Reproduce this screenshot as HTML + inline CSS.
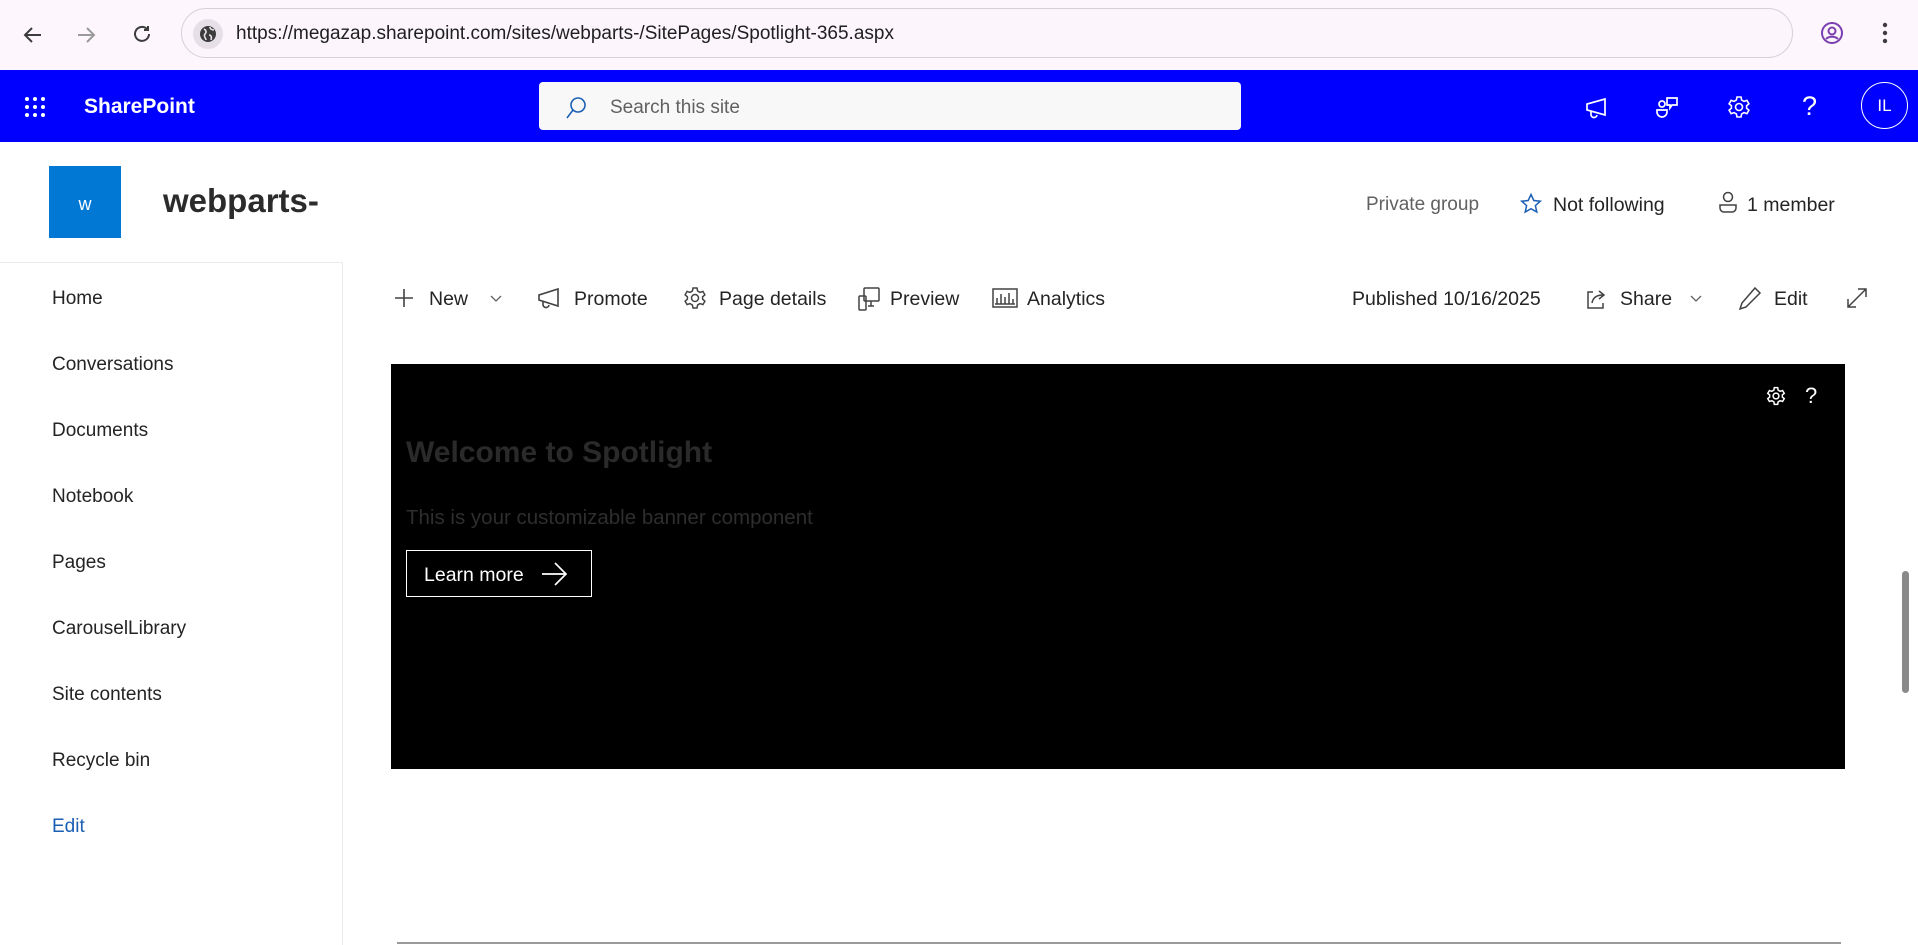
<!DOCTYPE html>
<html><head><meta charset="utf-8"><style>
*{margin:0;padding:0;box-sizing:border-box}
body{width:1918px;height:945px;overflow:hidden;background:#fff;font-family:"Liberation Sans",sans-serif;position:relative;color:#242424}
.a{position:absolute}
.t{position:absolute;white-space:nowrap}
svg{position:absolute;overflow:visible}
</style></head><body>
<div class="a" style="left:0;top:0;width:1918px;height:70px;background:#fdf7fd"></div>
<svg style="left:22px;top:24px" width="22" height="22" viewBox="0 0 22 22" fill="none" stroke="#3c3c3c" stroke-width="2"><path d="M19 11H4M10 4L3 11l7 7"/></svg>
<svg style="left:75px;top:24px" width="22" height="22" viewBox="0 0 22 22" fill="none" stroke="#9a9a9a" stroke-width="2"><path d="M3 11h15M12 4l7 7-7 7"/></svg>
<svg style="left:131px;top:23px" width="22" height="22" viewBox="0 0 22 22" fill="none" stroke="#3c3c3c" stroke-width="2"><path d="M18 11a7 7 0 1 1-2-5"/><path d="M17 3v4h-4"/></svg>
<div class="a" style="left:181px;top:8px;width:1612px;height:50px;border:1px solid #d6cfd8;border-radius:25px;background:#fcf5fc"></div>
<div class="a" style="left:193px;top:19px;width:30px;height:30px;border-radius:50%;background:#e6dfe8"></div>
<svg style="left:199px;top:25px" width="18" height="18" viewBox="0 0 18 18"><circle cx="9" cy="9" r="8" fill="#3c3c3c"/><path d="M5 4c2 1 3 3 1 5s1 4 1 6M11 2c0 2 2 3 4 3M10 10c2 0 3 2 2 5" stroke="#e6dfe8" stroke-width="1.6" fill="none"/></svg>
<div class="t" style="left:236px;top:23px;font-size:19px;color:#1f1f1f">https://megazap.sharepoint.com/sites/webparts-/SitePages/Spotlight-365.aspx</div>
<svg style="left:1820px;top:21px" width="24" height="24" viewBox="0 0 24 24" fill="none" stroke="#7b3fb0" stroke-width="2"><circle cx="12" cy="12" r="10"/><circle cx="12" cy="10" r="3.5"/><path d="M6 18c3-3 9-3 12 0"/></svg>
<svg style="left:1882px;top:22px" width="6" height="22" viewBox="0 0 6 22" fill="#3c3c3c"><circle cx="3" cy="3" r="2.2"/><circle cx="3" cy="11" r="2.2"/><circle cx="3" cy="19" r="2.2"/></svg>

<div class="a" style="left:0;top:70px;width:1918px;height:72px;background:#0000ff"></div>
<svg style="left:24px;top:96px" width="22" height="22" viewBox="0 0 22 22" fill="#fff"><circle cx="3" cy="3" r="2"/><circle cx="11" cy="3" r="2"/><circle cx="19" cy="3" r="2"/><circle cx="3" cy="11" r="2"/><circle cx="11" cy="11" r="2"/><circle cx="19" cy="11" r="2"/><circle cx="3" cy="19" r="2"/><circle cx="11" cy="19" r="2"/><circle cx="19" cy="19" r="2"/></svg>
<div class="t" style="left:84px;top:95px;font-size:21px;font-weight:bold;color:#fff">SharePoint</div>
<div class="a" style="left:539px;top:82px;width:702px;height:48px;background:#f8f8f8;border-radius:4px"></div>
<svg style="left:565px;top:96px" width="22" height="24" viewBox="0 0 22 24" fill="none" stroke="#1a5fb4" stroke-width="1.6"><circle cx="13" cy="9" r="7"/><path d="M8 14l-6 8"/></svg>
<div class="t" style="left:610px;top:97px;font-size:19px;color:#616161">Search this site</div>
<svg style="left:1584px;top:95px" width="24" height="24" viewBox="0 0 24 24" fill="none" stroke="#fff" stroke-width="1.7"><path d="M3 9v6l18 5V4z"/><path d="M7 16v3a3 3 0 0 0 6 1"/></svg>
<svg style="left:1655px;top:95px" width="24" height="24" viewBox="0 0 24 24" fill="none" stroke="#fff" stroke-width="1.7"><circle cx="7" cy="9" r="3"/><path d="M2 15h10v2a5 5 0 0 1-10 0z"/><path d="M12 3h10v7h-5l-2 3v-3h-3z"/></svg>
<svg style="left:1727px;top:95px" width="24" height="24" viewBox="0 0 24 24" fill="none" stroke="#fff" stroke-width="1.6"><circle cx="12" cy="12" r="3.5"/><path d="M10 2h4l.6 3 2.4 1.4 2.9-1 2 3.4-2.3 2v2.4l2.3 2-2 3.4-2.9-1L14.6 19 14 22h-4l-.6-3-2.4-1.4-2.9 1-2-3.4 2.3-2v-2.4l-2.3-2 2-3.4 2.9 1L9.4 5z"/></svg>
<div class="t" style="left:1802px;top:91px;font-size:27px;color:#fff">?</div>
<div class="a" style="left:1861px;top:82px;width:47px;height:47px;border:1.5px solid #fff;border-radius:50%;color:#fff;font-size:17px;text-align:center;line-height:46px">IL</div>

<div class="a" style="left:49px;top:166px;width:72px;height:72px;background:#0078d4;color:#fff;font-size:18px;text-align:center;line-height:76px">w</div>
<div class="t" style="left:163px;top:182px;font-size:33px;font-weight:bold;color:#2b2b2b">webparts-</div>
<div class="t" style="left:1366px;top:194px;font-size:19px;color:#616161">Private group</div>
<svg style="left:1520px;top:193px" width="22" height="22" viewBox="0 0 22 22" fill="none" stroke="#1a5fb4" stroke-width="1.5"><path d="M11 1.5l2.8 6 6.5.7-4.9 4.4 1.4 6.4L11 15.7l-5.8 3.3 1.4-6.4-4.9-4.4 6.5-.7z"/></svg>
<div class="t" style="left:1553px;top:194px;font-size:19.5px;color:#242424">Not following</div>
<svg style="left:1718px;top:191px" width="20" height="24" viewBox="0 0 20 24" fill="none" stroke="#424242" stroke-width="1.5"><circle cx="10" cy="6" r="4.5"/><path d="M2 14h16v3a4 4 0 0 1-4 4H6a4 4 0 0 1-4-4z"/></svg>
<div class="t" style="left:1747px;top:194px;font-size:19.5px;color:#242424">1 member</div>

<div class="a" style="left:0;top:262px;width:343px;height:683px;border-top:1px solid #eaeaea;border-right:1px solid #eaeaea"></div>
<div class="t" style="left:52px;top:288px;font-size:19px;line-height:22px">Home</div>
<div class="t" style="left:52px;top:354px;font-size:19px;line-height:22px">Conversations</div>
<div class="t" style="left:52px;top:420px;font-size:19px;line-height:22px">Documents</div>
<div class="t" style="left:52px;top:486px;font-size:19px;line-height:22px">Notebook</div>
<div class="t" style="left:52px;top:552px;font-size:19px;line-height:22px">Pages</div>
<div class="t" style="left:52px;top:618px;font-size:19px;line-height:22px">CarouselLibrary</div>
<div class="t" style="left:52px;top:684px;font-size:19px;line-height:22px">Site contents</div>
<div class="t" style="left:52px;top:750px;font-size:19px;line-height:22px">Recycle bin</div>
<div class="t" style="left:52px;top:816px;font-size:19px;line-height:22px;color:#1a5fb4">Edit</div>

<svg style="left:394px;top:288px" width="20" height="20" viewBox="0 0 20 20" stroke="#424242" stroke-width="1.6"><path d="M10 1v18M1 10h18"/></svg>
<div class="t" style="left:429px;top:288px;font-size:19.5px;line-height:22px">New</div>
<svg style="left:490px;top:295px" width="12" height="8" viewBox="0 0 12 8" fill="none" stroke="#616161" stroke-width="1.3"><path d="M1 1l5 5 5-5"/></svg>
<svg style="left:537px;top:287px" width="24" height="22" viewBox="0 0 24 22" fill="none" stroke="#424242" stroke-width="1.6"><path d="M2 8v5l19 6V2z"/><path d="M6 14v3a3 3 0 0 0 6 1"/></svg>
<div class="t" style="left:574px;top:288px;font-size:19.5px;line-height:22px">Promote</div>
<svg style="left:683px;top:286px" width="24" height="24" viewBox="0 0 24 24" fill="none" stroke="#424242" stroke-width="1.5"><circle cx="12" cy="12" r="3.5"/><path d="M10 2h4l.6 3 2.4 1.4 2.9-1 2 3.4-2.3 2v2.4l2.3 2-2 3.4-2.9-1L14.6 19 14 22h-4l-.6-3-2.4-1.4-2.9 1-2-3.4 2.3-2v-2.4l-2.3-2 2-3.4 2.9 1L9.4 5z"/></svg>
<div class="t" style="left:719px;top:288px;font-size:19.5px;line-height:22px">Page details</div>
<svg style="left:857px;top:286px" width="24" height="26" viewBox="0 0 24 26" fill="none" stroke="#424242" stroke-width="1.5"><rect x="7" y="2" width="15" height="13" rx="1"/><rect x="2" y="10" width="7" height="14" rx="1"/><path d="M14 15v5M11 20h6"/></svg>
<div class="t" style="left:890px;top:288px;font-size:19.5px;line-height:22px">Preview</div>
<svg style="left:992px;top:288px" width="26" height="20" viewBox="0 0 26 20" fill="none" stroke="#424242" stroke-width="1.5"><rect x="1" y="1" width="24" height="18"/><path d="M5 16V10M9 16V6M13 16V9M17 16V5M21 16V11M3 16h20"/></svg>
<div class="t" style="left:1027px;top:288px;font-size:19.5px;line-height:22px">Analytics</div>
<div class="t" style="left:1352px;top:288px;font-size:19.5px;line-height:22px">Published 10/16/2025</div>
<svg style="left:1585px;top:287px" width="22" height="24" viewBox="0 0 22 24" fill="none" stroke="#424242" stroke-width="1.5"><path d="M8 5H3v16h15v-5"/><path d="M7 16c1-6 5-8 11-8M14 4l5 4-5 4"/></svg>
<div class="t" style="left:1620px;top:288px;font-size:19.5px;line-height:22px">Share</div>
<svg style="left:1690px;top:295px" width="12" height="8" viewBox="0 0 12 8" fill="none" stroke="#616161" stroke-width="1.3"><path d="M1 1l5 5 5-5"/></svg>
<svg style="left:1738px;top:286px" width="24" height="24" viewBox="0 0 24 24" fill="none" stroke="#424242" stroke-width="1.5"><path d="M17 2l5 5L8 21l-6 2 2-6z"/></svg>
<div class="t" style="left:1774px;top:288px;font-size:19.5px;line-height:22px">Edit</div>
<svg style="left:1846px;top:287px" width="22" height="22" viewBox="0 0 22 22" fill="none" stroke="#424242" stroke-width="1.5"><path d="M2 20L20 2M12 2h8v8M2 12v8h8"/></svg>

<div class="a" style="left:391px;top:364px;width:1454px;height:405px;background:#000"></div>
<svg style="left:1766px;top:386px" width="20" height="20" viewBox="0 0 24 24" fill="none" stroke="#fff" stroke-width="1.8"><circle cx="12" cy="12" r="3.5"/><path d="M10 2h4l.6 3 2.4 1.4 2.9-1 2 3.4-2.3 2v2.4l2.3 2-2 3.4-2.9-1L14.6 19 14 22h-4l-.6-3-2.4-1.4-2.9 1-2-3.4 2.3-2v-2.4l-2.3-2 2-3.4 2.9 1L9.4 5z"/></svg>
<div class="t" style="left:1805px;top:383px;font-size:22px;color:#fff">?</div>
<div class="t" style="left:406px;top:436px;font-size:30px;font-weight:bold;color:#2a2a2a">Welcome to Spotlight</div>
<div class="t" style="left:406px;top:506px;font-size:20.5px;color:#2e2e2e">This is your customizable banner component</div>
<div class="a" style="left:406px;top:550px;width:186px;height:47px;border:1px solid #fff"></div>
<div class="t" style="left:424px;top:564px;font-size:19.5px;color:#fff">Learn more</div>
<svg style="left:541px;top:562px" width="26" height="24" viewBox="0 0 26 24" fill="none" stroke="#fff" stroke-width="1.7"><path d="M1 12h24M14 1l11 11-11 11"/></svg>

<div class="a" style="left:397px;top:942px;width:1444px;height:2px;background:#9a9a9a"></div>
<div class="a" style="left:1902px;top:571px;width:7px;height:122px;background:#8a8a8a;border-radius:4px"></div>
</body></html>
